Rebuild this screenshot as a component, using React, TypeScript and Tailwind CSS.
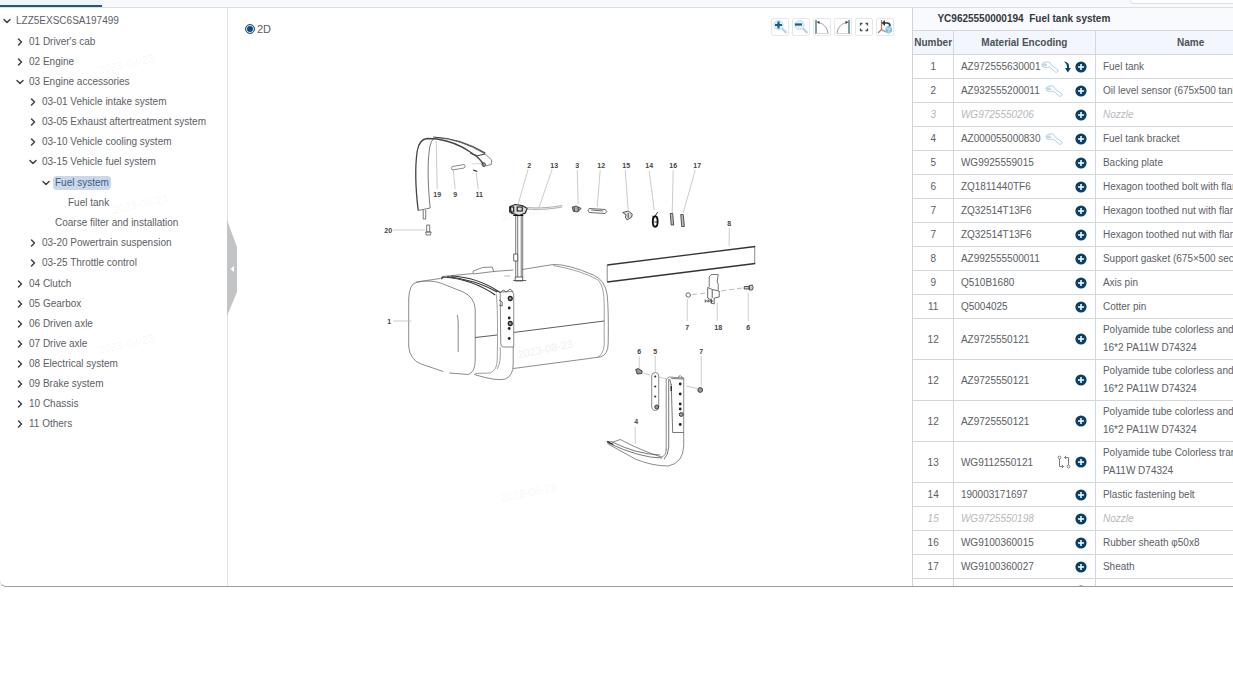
import { useState, type ReactNode } from "react";
import { ChevronDown, ChevronRight } from "lucide-react";

type TreeNode = {
  label: string;
  open?: boolean;
  children?: TreeNode[];
  leaf?: boolean;
};

const tree: TreeNode = {
  label: "LZZ5EXSC6SA197499",
  open: true,
  children: [
    { label: "01 Driver's cab" },
    { label: "02 Engine" },
    {
      label: "03 Engine accessories",
      open: true,
      children: [
        { label: "03-01 Vehicle intake system" },
        { label: "03-05 Exhaust aftertreatment system" },
        { label: "03-10 Vehicle cooling system" },
        {
          label: "03-15 Vehicle fuel system",
          open: true,
          children: [
            {
              label: "Fuel system",
              open: true,
              children: [{ label: "Fuel tank", leaf: true }],
            },
            { label: "Coarse filter and installation", leaf: true },
          ],
        },
        { label: "03-20 Powertrain suspension" },
        { label: "03-25 Throttle control" },
      ],
    },
    { label: "04 Clutch" },
    { label: "05 Gearbox" },
    { label: "06 Driven axle" },
    { label: "07 Drive axle" },
    { label: "08 Electrical system" },
    { label: "09 Brake system" },
    { label: "10 Chassis" },
    { label: "11 Others" },
  ],
};

type Part = {
  number: string;
  code: string;
  name: string[];
  muted?: boolean;
  wrench?: boolean;
  replaced?: boolean;
  compare?: boolean;
};

const tube = ["Polyamide tube colorless and transparent", "16*2 PA11W D74324"];

const parts: Part[] = [
  { number: "1", code: "AZ972555630001", name: ["Fuel tank"], wrench: true, replaced: true },
  { number: "2", code: "AZ932555200011", name: ["Oil level sensor (675x500 tank)"], wrench: true },
  { number: "3", code: "WG9725550206", name: ["Nozzle"], muted: true },
  { number: "4", code: "AZ000055000830", name: ["Fuel tank bracket"], wrench: true },
  { number: "5", code: "WG9925559015", name: ["Backing plate"] },
  { number: "6", code: "ZQ1811440TF6", name: ["Hexagon toothed bolt with flange"] },
  { number: "7", code: "ZQ32514T13F6", name: ["Hexagon toothed nut with flange"] },
  { number: "7", code: "ZQ32514T13F6", name: ["Hexagon toothed nut with flange"] },
  { number: "8", code: "AZ992555500011", name: ["Support gasket (675×500 section)"] },
  { number: "9", code: "Q510B1680", name: ["Axis pin"] },
  { number: "11", code: "Q5004025", name: ["Cotter pin"] },
  { number: "12", code: "AZ9725550121", name: tube },
  { number: "12", code: "AZ9725550121", name: tube },
  { number: "12", code: "AZ9725550121", name: tube },
  {
    number: "13",
    code: "WG9112550121",
    name: ["Polyamide tube Colorless transparent", "PA11W D74324"],
    compare: true,
  },
  { number: "14", code: "190003171697", name: ["Plastic fastening belt"] },
  { number: "15", code: "WG9725550198", name: ["Nozzle"], muted: true },
  { number: "16", code: "WG9100360015", name: ["Rubber sheath φ50x8"] },
  { number: "17", code: "WG9100360027", name: ["Sheath"] },
  { number: "18", code: "WG9925550730", name: ["Bracket"] },
];

const listPadding = ["pt-px", "pb-px", "pt-px", ""];

function TreeItem({
  node,
  depth,
  selected,
  onSelect,
}: {
  node: TreeNode;
  depth: number;
  selected: string;
  onSelect: (label: string) => void;
}) {
  const [open, setOpen] = useState(Boolean(node.open));
  const Chevron = open ? ChevronDown : ChevronRight;
  const active = selected === node.label;

  return (
    <li>
      <div className="flex h-5 items-center gap-px whitespace-nowrap">
        {node.leaf ? (
          <span className="w-3" />
        ) : (
          <button
            type="button"
            aria-label={`Toggle ${node.label}`}
            aria-expanded={open}
            onClick={() => setOpen(!open)}
            className="flex w-3 justify-center text-[#3c4248]"
          >
            <Chevron size={12} strokeWidth={3} />
          </button>
        )}
        <button
          type="button"
          onClick={() => onSelect(node.label)}
          className={`rounded-sm px-0.5 leading-[14px] ${active ? "bg-[#cad8ea] text-[#3d5b82]" : ""}`}
        >
          {node.label}
        </button>
      </div>
      {open && node.children ? (
        <ul className={`pl-[13px] ${listPadding[depth]}`}>
          {node.children.map((child) => (
            <TreeItem
              key={child.label}
              node={child}
              depth={depth + 1}
              selected={selected}
              onSelect={onSelect}
            />
          ))}
        </ul>
      ) : null}
    </li>
  );
}

function Zoomer({ minus }: { minus?: boolean }) {
  return (
    <svg viewBox="0 0 16 16" className="size-4">
      <circle cx="6.5" cy="6" r="4.6" fill="#dff1f8" stroke="#c3dfec" />
      <path d="M10 9.5 14.5 14" stroke="#b5bdc4" strokeWidth="2" />
      <path d="M10 9.5 14.5 14" stroke="#e8edf0" strokeWidth="0.7" />
      <path d={minus ? "M2 5.5h7" : "M3 6h7M6.5 2.5v7"} stroke="#155d8c" strokeWidth="2.2" />
    </svg>
  );
}

function Rotator({ flip }: { flip?: boolean }) {
  return (
    <svg viewBox="0 0 16 16" className={flip ? "size-4 -scale-x-100" : "size-4"} fill="none">
      <path d="M2 1v14" stroke="#3d6c70" strokeWidth="1.3" />
      <path d="M4 3.5C9 4 13 8 14 14" stroke="#9a9fa3" />
      <path d="M2 14.5h13" stroke="#c9cdd0" strokeWidth="0.8" />
      <path d="M2.500 3 5.500 2v3z" fill="#33393d" />
    </svg>
  );
}

const tools: { label: string; icon: ReactNode }[] = [
  { label: "Zoom in", icon: <Zoomer /> },
  { label: "Zoom out", icon: <Zoomer minus /> },
  { label: "Rotate left", icon: <Rotator /> },
  { label: "Rotate right", icon: <Rotator flip /> },
  {
    label: "Fit to window",
    icon: (
      <svg viewBox="0 0 16 16" className="size-4" fill="none" stroke="#4a4f54" strokeWidth="1.3">
        <path d="M4.500 6.500v-2h2M9.500 4.500h2v2M11.500 9.500v2h-2M6.500 11.500h-2v-2" />
      </svg>
    ),
  },
  {
    label: "Reset view",
    icon: (
      <svg viewBox="0 0 16 16" className="size-4" fill="none">
        <path d="M4.500 1v9.500L1 14M4.500 10.500 9 13" stroke="#a98261" strokeWidth="1.3" />
        <path d="m8.500 8.500 3-2 3.500 1.500v4.500l-3 2.500-3.500-2z" fill="#7cc4e0" />
        <path d="m8.500 8.500 3.500 1.500 3-2M12 10v5" stroke="#c6e8f4" />
        <path d="M7 4h3c2 0 3 1.500 3 3" stroke="#33383c" strokeWidth="1.700" />
        <path d="M8 1v6L4.500 4z" fill="#33383c" />
      </svg>
    ),
  },
];

const callouts: [string, number, number, string][] = [
  ["2", 529, 165, "M528 169 518 204"],
  ["13", 554, 165, "M552 169 539 207"],
  ["3", 577, 165, "M577 170 578 204"],
  ["12", 601, 165, "M600 170 597 207"],
  ["15", 626, 165, "M625 170 628 210"],
  ["14", 649, 165, "M649 171 654 210"],
  ["16", 673, 165, "M673 170 672 213"],
  ["17", 697, 165, "M695 170 683 213"],
  ["19", 437, 194, "M436 141 437 189"],
  ["9", 455, 194, "M453 170 455 189"],
  ["11", 479, 194, "M476 173 478 189"],
  ["20", 388, 230, "M393 230H425"],
  ["8", 729, 223, "M729 228V246"],
  ["1", 389, 321, "M393 321H411"],
  ["7", 687, 327, "M687 299V321"],
  ["18", 718, 327, "M717 303V321"],
  ["6", 748, 327, "M748 293V321"],
  ["6", 639, 351, "M639 356V368"],
  ["5", 655, 351, "M655 356V373"],
  ["7", 701, 351, "M701 356V386"],
  ["4", 636, 421, "M635 427V444"],
];

function FuelTankDrawing() {
  return (
    <svg
      viewBox="228 46 684 540"
      role="img"
      aria-label="Fuel tank exploded view"
      className="min-h-0 w-full flex-1"
      fill="none"
      stroke="#6d6d6d"
      strokeWidth="0.8"
    >
      <g stroke="none" fill="#f1f1f1" fontSize="11">
        <text x="516" y="353" transform="rotate(-12 545 345)">2023-08-23</text>
        <text x="500" y="216" fill="#f8f8f8" transform="rotate(-12 525 208)">2023-08-23</text>
        <text x="500" y="497" fill="#f9f9f9" transform="rotate(-12 525 493)">2023-08-23</text>
      </g>

      {/* tank body */}
      <path d="M416 282.500C426 281 434 281 443 284L467 293Q473 297 475 307V360Q475 372 468 374.500L448 373M443 371.500 421 364Q410 360 409 347V300Q409 284 416 282.500Z" fill="#fff" stroke="none" />
      <path d="M443 371.500 421 364Q410 360 408.500 347V299Q409 284 416 282.500C426 280 436 281 443 284L463 292Q474 297 475 309V360Q475 372 468 374.500L449 373" />
      <path d="M457 315Q458 318 458 324V352" />
      <path d="M416 282 440 278.500 442 276.500 473 273.500V271Q482 266 492 267L493.500 271.500 473 274M493 271.500 513 270M522 269.500 553 264.500Q568 264 593 275Q605 280 607 295Q608.500 310 608 343Q608 355 600 357L513 368.500" />
      <path d="M553 265.500Q580 270 598 280Q604 286 604 305V345Q603 355 597 357.500" stroke="#8a8a8a" />
      <path d="M475 337.500 497 335M513 332.500 604 321" stroke="#333" />
      <path d="M504 276h6" stroke="#aaa" />

      {/* strap over the tank */}
      <path d="M443 277Q472 279 495 295M441 279 443 277" stroke="#333" strokeWidth="1.100" />
      <path d="M451 276Q477 277 500 292.500M447 276.500Q476 280 497 292" stroke="#333" strokeWidth="1.200" />
      <path d="M496 294Q498 310 497 360Q497 370 490 373L475 373.500M500 347Q501 363 497 369" stroke="#888" />
      <path d="M513 347V364Q513 376 505 379Q497 381.500 474 374.500" />
      <path d="M500 292 512 291.500 513.500 294V347H503Q500.500 347 500.500 343Z" fill="#fff" />
      <path d="M500 293 503 290 506 292 510 289 513 292M499 300l3 2v4l-3-1" stroke="#444" />
      <g fill="#222" stroke="none">
        <circle cx="509" cy="308" r="1.400" />
        <circle cx="509" cy="318" r="1.400" />
        <circle cx="509" cy="328.500" r="1.400" />
        <circle cx="509" cy="338.500" r="1.400" />
      </g>
      <g stroke="#222" fill="#999" strokeWidth="1.300">
        <circle cx="510" cy="298.500" r="2" />
        <circle cx="510" cy="323.500" r="2" />
      </g>

      {/* level sensor and hose */}
      <path d="M515.500 215V278M517.500 215V278M521 215V278M522.500 215V278" stroke="#555" />
      <path d="M513.500 254h4v7h-4zM515 277h7.500v4H515zM513 280.500h13" fill="#fff" stroke="#444" />
      <path d="M510 206.500 515 204.500 522 205.500 527 208.500 525 213 519 215.500 511 213Z" fill="#ddd" stroke="#222" strokeWidth="1.200" />
      <path d="M509.500 207h4v5h-4zM517 207h5v4h-5zM513 215.500h10" stroke="#111" strokeWidth="1.100" />
      <path d="M526 207.500C540 208.500 550 207.500 562 205.500M526 209C540 210 550 209 562 207" stroke="#999" />

      {/* upper strap */}
      <path d="M418 210.500C415.500 190 415 165 417 151Q419 139 427 138.500L437 139Q456 142 470 152Q480 158 483.500 165.500" stroke="#444" strokeWidth="1.300" />
      <path d="M418 210.500 430 208C428 190 427 165 429 151Q430 139 436 137.500Q460 139 485 154" stroke="#555" />
      <path d="M433 137Q460 138 485 153M470 153 476 156 485 154" stroke="#444" strokeWidth="1.100" />
      <path d="M485 154 491.500 160 491 164.500 483 166.500M475 154 485 165" stroke="#666" />
      <circle cx="483.500" cy="164.500" r="1.800" stroke="#333" />
      <path d="M423 210V219h2.500V210M426.500 225h3v7h-3zM425.500 232h5.500l-1 3h-4z" fill="#fff" stroke="#555" />
      <path d="M452 166.500 464 164.500Q466 166.500 464 168L452 170Q450.500 168 452 166.500Z" />
      <path d="M473 170l4 1.500" stroke="#222" strokeWidth="1.200" />
      <path d="M472 164 481 163.500" stroke="#ccc" />

      {/* fittings */}
      <path d="M572 207 576 206 581 208.500 577 212 573 211ZM574 207v5M578 207v5" fill="#aaa" stroke="#333" />
      <path d="M589 208.500 605 209.500Q608 211.500 605 213.500L589 212.500Q587 210.500 589 208.500ZM591 210 603 211" stroke="#444" />
      <path d="M622.500 212.500 628 211 632 214 631.500 217 627 220 625 217 626 215ZM628 213v5" stroke="#333" fill="#ddd" />
      <ellipse cx="655" cy="221.500" rx="2.400" ry="5.300" stroke="#111" strokeWidth="1.900" />
      <path d="M654 222h3M655 216 657.500 212M652 216l3 2" stroke="#111" />
      <path d="M670 213.500h2.500l1 11.500h-2.500zM680.500 214.500h2.500l1.200 12h-2.700z" fill="#bbb" stroke="#333" />

      {/* gasket */}
      <path d="M607 265V282M754.500 246V264" />
      <path d="M607 265 755 246.500M607 282 755 263.500" stroke="#333" strokeWidth="1.300" />

      {/* rear bracket */}
      <path d="M709 287V277L711 274.500H718L717 282 718 284V290" fill="#fff" stroke="#555" />
      <path d="M707.500 287.500 712 289.500 719 291V297L714 298V304L711 303V300L707.500 298Z" fill="#fff" stroke="#444" />
      <path d="M712 290V298M705 301h8M705 299.500v3M711 298.500v5M708 299.500v3" stroke="#333" />
      <path d="M692 294.500 706 293M721 291 742 288" stroke="#aaa" strokeDasharray="5 3" />
      <circle cx="688" cy="295" r="2.200" stroke="#444" />
      <path d="M744 286.500h5v2.500h-5zM749 285.500l3-.5 1 2.500-1 2.500h-3z" stroke="#333" fill="#ccc" />

      {/* lower bracket */}
      <path d="M666 450V379L669 377 683.500 378V446Q683 463 668 466Q652 466 635 459L608 444L607 441.500 613 442 620 439.500Q642 451 661 457Q666 456 666 449" fill="#fff" />
      <path d="M608 443Q640 458 662 458M612 442Q636 454 660 455" stroke="#555" />
      <path d="M668.500 379V447Q668 455 664 459M671 384 672.500 432.500H683.500M671 385 669.500 379M671 378.500 683 379M678 377l2-1.500 3 3" stroke="#555" />
      <path d="M671 386v5M607 441.500l6 3" stroke="#222" strokeWidth="1.300" />
      <g fill="#222" stroke="none">
        <circle cx="680" cy="384" r="1.400" />
        <circle cx="680" cy="394" r="1.400" />
        <circle cx="680" cy="404" r="1.400" />
        <circle cx="680" cy="409" r="1.400" />
        <circle cx="680" cy="424.500" r="1.400" />
      </g>
      <rect x="651.500" y="372.500" width="7" height="38" rx="3.500" />
      <g fill="#333" stroke="none">
        <circle cx="655" cy="376.500" r="1.100" />
        <circle cx="655" cy="386.500" r="1.100" />
        <circle cx="655" cy="396.500" r="1.100" />
      </g>
      <g stroke="#222" fill="#999">
        <circle cx="656.500" cy="407" r="2" />
        <circle cx="681" cy="414.500" r="2" />
        <circle cx="700" cy="390" r="2.400" />
        <path d="M635.500 369.500 638 368.500 642 371 641.500 373.500 637 374Z" />
      </g>
      <path d="M643 373 650 375M659 377 666 379M686 386 697 388.500" stroke="#bbb" />

      {callouts.map(([label, x, y, leader]) => (
        <g key={`${label}-${x}`}>
          <path d={leader} stroke="#b4b4b4" strokeWidth="0.700" />
          <text
            x={x}
            y={y + 2.5}
            textAnchor="middle"
            fontSize="7"
            fontWeight="bold"
            fill="#444"
            stroke="none"
          >
            {label}
          </text>
        </g>
      ))}
    </svg>
  );
}

function PartRow({ part }: { part: Part }) {
  return (
    <tr
      className={`${part.name.length > 1 ? "h-[41px]" : "h-6"} border-y border-[#d3d7db] ${
        part.muted ? "text-[#b5b8bb] italic" : ""
      }`}
    >
      <td className="border-r border-[#d3d7db] text-center">{part.number}</td>
      <td className="border-r border-[#d3d7db] pr-2 pl-[7px]">
        <div className="flex items-center justify-between">
          <span>{part.code}</span>
          <span className="flex items-center gap-1">
            {part.wrench ? (
              <svg
                viewBox="0 0 18 12"
                className={part.replaced ? "h-3 w-[18px] shrink-0" : "mr-2 h-3 w-[18px] shrink-0"}
                fill="none"
                stroke="#a9c8da"
                strokeWidth="0.900"
              >
                <path d="M.7 3.500C2 1.500 6 .3 8.500 1.200L10.500 4.500 17 9c.6 1.400-1 2.700-2.400 2.200L8.500 6C6 6.800 2.500 6.200 1 5.200L5.500 4.300 5 3Z" />
              </svg>
            ) : null}
            {part.replaced ? (
              <svg viewBox="0 0 8 12" className="h-3 w-2 shrink-0" fill="#0c456b">
                <path d="M.5.500C5 .800 6.500 3 6 7h2l-3.200 4.500L2 7h2C4.300 4.500 3.500 2 .5.500Z" />
              </svg>
            ) : null}
            {part.compare ? (
              <svg viewBox="0 0 14 14" className="size-3.5" fill="none" stroke="#7b8186">
                <circle cx="2.500" cy="2.500" r="1.400" />
                <circle cx="11.500" cy="11.500" r="1.400" />
                <path d="M2.500 4v7.500h4M11.500 10V2.500h-4M4.800 9.800l1.700 1.700-1.700 1.700M9.200.8 7.500 2.500l1.700 1.700" />
              </svg>
            ) : null}
            <button type="button" aria-label={`Add ${part.code}`} className="shrink-0">
              <svg viewBox="0 0 12 12" className="size-3">
                <circle cx="6" cy="6" r="5.600" fill="#084067" />
                <path d="M3 6h6M6 3v6" stroke="#fff" strokeWidth="1.500" />
              </svg>
            </button>
          </span>
        </div>
      </td>
      <td className="pl-[7px] leading-[18px] whitespace-nowrap">
        {part.name.map((line) => (
          <div key={line}>{line}</div>
        ))}
      </td>
    </tr>
  );
}

function Watermark({ place }: { place: string }) {
  return (
    <span
      aria-hidden="true"
      className={`pointer-events-none absolute -rotate-12 text-[11px] text-black/5 ${place}`}
    >
      2023-08-23
    </span>
  );
}

export default function App() {
  const [selected, setSelected] = useState("Fuel system");
  const [sidebar, setSidebar] = useState(true);

  return (
    <div className="bg-white font-['Liberation_Sans',Arial,sans-serif] text-[10px] text-[#5b6066]">
      <div className="flex h-[calc(100vh-113px)] flex-col overflow-hidden rounded-bl-md border-b border-[#9a9da0]">
        <header className="flex h-2 shrink-0 justify-between border-b border-[#dcdfe2] bg-[#f7f9fd]">
          <div className="w-[102px] border-b-2 border-[#2a567d] bg-[#edf4fb]" />
          <div className="h-1 w-[103px] rounded-bl-sm border-b border-l border-[#dcdfe2] bg-white" />
        </header>

        <main className="flex min-h-0 flex-1">
          {sidebar ? (
            <nav className="relative w-[228px] shrink-0 border-r border-[#e2e4e6] pt-[3px] pl-px">
              <ul>
                <TreeItem node={tree} depth={0} selected={selected} onSelect={setSelected} />
              </ul>
              <Watermark place="top-12 left-[98px]" />
              <Watermark place="top-[188px] left-[112px]" />
              <Watermark place="top-[328px] left-[98px]" />
            </nav>
          ) : null}

          <section className="relative flex min-w-0 flex-1 flex-col">
            <div className="flex h-[38px] shrink-0 items-center justify-between pt-1 pr-[18px] pl-[17px]">
              <label className="flex items-center gap-0.5 text-[11px]">
                <input
                  type="radio"
                  name="view"
                  defaultChecked
                  className="size-2.5 appearance-none rounded-full border border-[#245a8c] bg-[#174a7c] shadow-[inset_0_0_0_1px_#dbe8f5]"
                />
                2D
              </label>
              <div className="flex gap-[3px] pb-1">
                {tools.map((tool) => (
                  <button
                    key={tool.label}
                    type="button"
                    aria-label={tool.label}
                    className="flex size-[18px] items-center justify-center rounded-xs border border-[#e6e8ea]"
                  >
                    {tool.icon}
                  </button>
                ))}
              </div>
            </div>
            <FuelTankDrawing />
            <button
              type="button"
              aria-label="Toggle sidebar"
              onClick={() => setSidebar(!sidebar)}
              className="absolute top-[212px] -left-px"
            >
              <svg viewBox="0 0 10 96" className="h-24 w-2.5">
                <path d="M0 0 10 27V72L0 96Z" fill="#c2c3c4" />
                <path d="M7 46v6L3.500 49Z" fill="#fff" />
              </svg>
            </button>
          </section>

          <section className="w-[26%] shrink-0 overflow-hidden border-l border-[#cfd3d7]">
            <h2 className="h-[22px] bg-[#f8fafd] pl-6 text-[10px] leading-[21px] font-bold whitespace-pre text-[#33383d]">
              YC9625550000194  Fuel tank system
            </h2>
            <table className="w-[372px] table-fixed border-collapse">
              <thead>
                <tr className="h-6 border-y border-[#d3d7db] bg-[#f3f7fd] text-[#4b5157]">
                  <th className="w-10 border-r border-[#d3d7db]">Number</th>
                  <th className="w-[142px] border-r border-[#d3d7db]">Material Encoding</th>
                  <th>Name</th>
                </tr>
              </thead>
              <tbody>
                {parts.map((part, index) => (
                  <PartRow key={index} part={part} />
                ))}
              </tbody>
            </table>
          </section>
        </main>
      </div>
    </div>
  );
}
